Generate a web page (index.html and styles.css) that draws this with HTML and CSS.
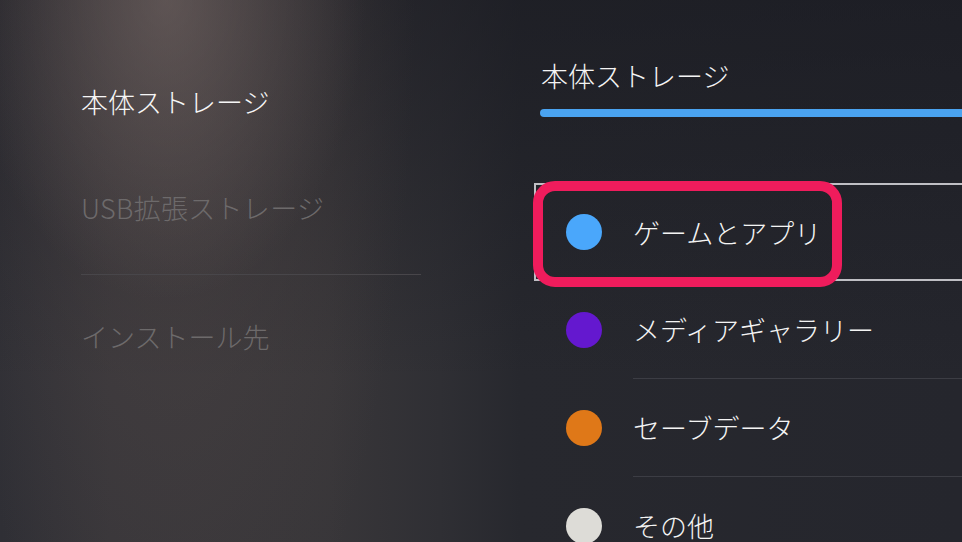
FILE: index.html
```html
<!DOCTYPE html>
<html lang="ja">
<head>
<meta charset="utf-8">
<title>ストレージ</title>
<link rel="stylesheet" href="styles.css">
</head>
<body>
<div class="screen">
  <nav class="side">
    <div class="side-item active">本体ストレージ</div>
    <div class="side-item dim usb">USB拡張ストレージ</div>
    <div class="side-divider"></div>
    <div class="side-item dim install">インストール先</div>
  </nav>
  <main class="content">
    <h1 class="tab">本体ストレージ</h1>
    <div class="tab-bar"></div>
    <ul class="cats">
      <li class="cat selected">
        <span class="dot blue"></span>
        <span class="label">ゲームとアプリ</span>
        <span class="mark"></span>
      </li>
      <li class="cat">
        <span class="dot purple"></span>
        <span class="label">メディアギャラリー</span>
      </li>
      <li class="cat">
        <span class="dot orange"></span>
        <span class="label">セーブデータ</span>
      </li>
      <li class="cat">
        <span class="dot light"></span>
        <span class="label">その他</span>
      </li>
    </ul>
  </main>
</div>
</body>
</html>
```
FILE: styles.css
```css
html, body {
  margin: 0;
  padding: 0;
  width: 962px;
  height: 542px;
  overflow: hidden;
}

body {
  font-family: "Noto Sans CJK JP Light", "Noto Sans CJK JP DemiLight", "Noto Sans CJK JP", "Noto Sans", sans-serif;
  font-weight: 300;
  color: #f4f4f4;
  background:
    radial-gradient(ellipse 200px 300px at 165px 0px, rgba(130, 115, 112, 0.45), rgba(130, 115, 112, 0) 100%),
    radial-gradient(ellipse 240px 760px at 175px 0px, rgba(85, 75, 74, 0.55), rgba(85, 75, 74, 0) 100%),
    linear-gradient(180deg, rgba(22, 23, 30, 0.5) 0, rgba(22, 23, 30, 0) 70%),
    linear-gradient(90deg, #2f2f35 0, #373539 110px, #383639 330px, #2f2f34 440px, #27282e 520px, #25262d 100%);
}

.screen {
  display: flex;
  width: 962px;
  height: 542px;
  overflow: hidden;
}

/* left navigation */
.side {
  width: 534px;
  flex: none;
  box-sizing: border-box;
  padding: 75px 0 0 81px;
  display: flex;
  flex-direction: column;
}

.side-item {
  height: 54px;
  line-height: 54px;
  font-size: 27px;
  white-space: nowrap;
}

.side-item.active {
  color: #f6f6f6;
}

.side-item.dim {
  color: #6d6a6b;
}

.side-item.usb {
  margin-top: 52px;
  letter-spacing: 0.3px;
}

.side-divider {
  width: 340px;
  height: 1px;
  margin-top: 39px;
  background: #48464a;
}

.side-item.install {
  margin-top: 35px;
}

/* right content */
.content {
  flex: 1;
  min-width: 0;
  padding-top: 56px;
}

.tab {
  margin: 0;
  padding-left: 7px;
  font-size: 27px;
  font-weight: 300;
  line-height: 40px;
  color: #f4f4f4;
  white-space: nowrap;
}

.tab-bar {
  margin: 13px -20px 0 6px;
  height: 8px;
  border-radius: 4px 0 0 4px;
  background: #4aa3f0;
}

.cats {
  list-style: none;
  margin: 66px -30px 0 0;
  padding: 0;
}

.cat {
  position: relative;
  display: flex;
  align-items: center;
  height: 98px;
  box-sizing: border-box;
  padding-left: 32px;
}

.dot {
  flex: none;
  width: 36px;
  height: 36px;
  border-radius: 50%;
  margin-right: 31px;
}

.dot.blue { background: #4aa7fb; }
.dot.purple { background: #6418cf; }
.dot.orange { background: #df7818; }
.dot.light { background: #dddcd7; }

.label {
  flex: 1;
  align-self: stretch;
  display: flex;
  align-items: center;
  font-size: 27px;
  white-space: nowrap;
  color: #f4f4f4;
  border-bottom: 1px solid #3c3d44;
}

.cat.selected {
  border: 2px solid #bfbfc4;
  border-right: none;
  padding-left: 30px;
}

.cat.selected .label {
  border-bottom: none;
}

.mark {
  position: absolute;
  left: -3px;
  top: -4px;
  width: 309px;
  height: 106px;
  box-sizing: border-box;
  border: 10px solid #ef1c5c;
  border-radius: 22px;
}
```
